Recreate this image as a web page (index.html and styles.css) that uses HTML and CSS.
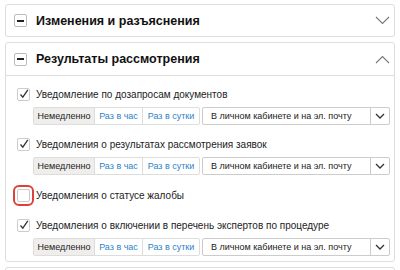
FILE: index.html
```html
<!DOCTYPE html>
<html lang="ru">

<head>
    <meta charset="UTF-8">
    <meta name="viewport" content="width=device-width, initial-scale=1.0">
    <title>Уведомления</title>
    <link rel="stylesheet" href="styles.css">
</head>

<body>
    <div class="panel">
        <div class="panel-head">
            <span class="toggle"></span>
            <h2>Изменения и разъяснения</h2>
            <svg class="chevron" width="15" height="9" viewBox="0 0 15 9"><path d="M1 1l6.5 6.5L14 1" fill="none" stroke="#777" stroke-width="1.1"/></svg>
        </div>
    </div>

    <div class="panel">
        <div class="panel-head open">
            <span class="toggle"></span>
            <h2>Результаты рассмотрения</h2>
            <svg class="chevron" width="15" height="9" viewBox="0 0 15 9"><path d="M1 8l6.5-6.5L14 8" fill="none" stroke="#777" stroke-width="1.1"/></svg>
        </div>
        <div class="panel-body">
            <div class="item">
                <label class="check"><span class="box"><svg width="10" height="10" viewBox="0 0 10 10"><path d="M1.5 5.5l2.3 2.6L8.8 0.8" fill="none" stroke="#333" stroke-width="1.3"/></svg></span>Уведомление по дозапросам документов</label>
                <div class="controls">
                    <div class="seg">
                        <span class="seg-btn active">Немедленно</span>
                        <span class="seg-btn">Раз в час</span>
                        <span class="seg-btn">Раз в сутки</span>
                    </div>
                    <div class="select">
                        <span class="select-text">В личном кабинете и на эл. почту</span>
                        <span class="select-arrow"><svg width="10" height="6" viewBox="0 0 10 6"><path d="M1 1l4 4 4-4" fill="none" stroke="#333" stroke-width="1.3"/></svg></span>
                    </div>
                </div>
            </div>

            <div class="item">
                <label class="check"><span class="box"><svg width="10" height="10" viewBox="0 0 10 10"><path d="M1.5 5.5l2.3 2.6L8.8 0.8" fill="none" stroke="#333" stroke-width="1.3"/></svg></span>Уведомления о результатах рассмотрения заявок</label>
                <div class="controls">
                    <div class="seg">
                        <span class="seg-btn active">Немедленно</span>
                        <span class="seg-btn">Раз в час</span>
                        <span class="seg-btn">Раз в сутки</span>
                    </div>
                    <div class="select">
                        <span class="select-text">В личном кабинете и на эл. почту</span>
                        <span class="select-arrow"><svg width="10" height="6" viewBox="0 0 10 6"><path d="M1 1l4 4 4-4" fill="none" stroke="#333" stroke-width="1.3"/></svg></span>
                    </div>
                </div>
            </div>

            <div class="item marked">
                <label class="check"><span class="box"></span>Уведомления о статусе жалобы</label>
            </div>

            <div class="item">
                <label class="check"><span class="box"><svg width="10" height="10" viewBox="0 0 10 10"><path d="M1.5 5.5l2.3 2.6L8.8 0.8" fill="none" stroke="#333" stroke-width="1.3"/></svg></span>Уведомления о включении в перечень экспертов по процедуре</label>
                <div class="controls">
                    <div class="seg">
                        <span class="seg-btn active">Немедленно</span>
                        <span class="seg-btn">Раз в час</span>
                        <span class="seg-btn">Раз в сутки</span>
                    </div>
                    <div class="select">
                        <span class="select-text">В личном кабинете и на эл. почту</span>
                        <span class="select-arrow"><svg width="10" height="6" viewBox="0 0 10 6"><path d="M1 1l4 4 4-4" fill="none" stroke="#333" stroke-width="1.3"/></svg></span>
                    </div>
                </div>
            </div>
        </div>
    </div>

    <div class="panel">
        <div class="panel-head">
            <span class="toggle"></span>
        </div>
    </div>
</body>

</html>
```

FILE: styles.css
```css
body {
    background-color: #fff;
    margin: 0;
    padding: 4px 5px;
    font-family: "Liberation Sans", Arial, sans-serif;
    color: #222;
}

/* panels */
.panel {
    border: 1px solid #ddd;
    border-radius: 3px;
    margin-bottom: 5px;
}

.panel-head {
    display: flex;
    align-items: center;
    height: 31px;
    padding: 0 4px 0 8px;
}

.panel-head.open {
    height: 32px;
    border-bottom: 1px solid #ddd;
}

.panel-head h2 {
    flex: 1;
    margin: 0 0 0 9px;
    font-size: 12.5px;
    font-weight: bold;
    color: #111;
}

.toggle {
    position: relative;
    width: 11px;
    height: 11px;
    border: 1px solid #bbb;
    border-radius: 2px;
}

.toggle::after {
    content: "";
    position: absolute;
    left: 2px;
    top: 4.5px;
    width: 7px;
    height: 2px;
    background-color: #222;
}

.panel-body {
    padding: 11px 4px 5px 11px;
}

/* items */
.item {
    margin-bottom: 12px;
}

.item.marked {
    padding-top: 1px;
    margin-bottom: 16px;
}

.item:last-child {
    margin-bottom: 0;
}

.check {
    display: flex;
    align-items: center;
    gap: 6px;
    height: 14px;
    font-size: 10px;
    color: #222;
}

.box {
    display: flex;
    align-items: center;
    justify-content: center;
    width: 11px;
    height: 11px;
    border: 1px solid #ccc;
    border-radius: 2px;
    background-color: #fff;
}

.marked .box {
    outline: 2px solid #e0403a;
    outline-offset: 2px;
}

.controls {
    display: flex;
    gap: 2px;
    margin: 6px 0 0 16px;
}

.seg {
    display: flex;
    flex: none;
    border: 1px solid #ddd;
    border-radius: 2px;
}

.seg-btn {
    display: flex;
    align-items: center;
    justify-content: center;
    height: 16px;
    font-size: 9px;
    white-space: nowrap;
    color: #2f7fc8;
    border-left: 1px solid #ddd;
}

.seg-btn:nth-child(1) {
    width: 60px;
    border-left: none;
}

.seg-btn:nth-child(2) {
    width: 47px;
}

.seg-btn:nth-child(3) {
    width: 56px;
}

.seg-btn.active {
    background-color: #efeeec;
    color: #222;
}

.select {
    flex: 1;
    display: flex;
    border: 1px solid #ccc;
    border-radius: 2px;
}

.select-text {
    flex: 1;
    display: flex;
    align-items: center;
    padding-left: 8px;
    font-size: 9px;
    white-space: nowrap;
    color: #222;
}

.select-arrow {
    display: flex;
    align-items: center;
    justify-content: center;
    width: 18px;
    border-left: 1px solid #ccc;
}
```
